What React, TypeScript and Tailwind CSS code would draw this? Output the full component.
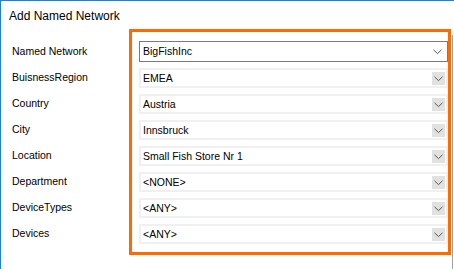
import React from "react";

const Chevron = () => (
  <svg width="9" height="6" viewBox="0 0 9 6" className="block">
    <polyline points="0.5,0.8 4.5,4.6 8.5,0.8" fill="none" stroke="#5a5a5a" strokeWidth="1" />
  </svg>
);

const rows = [
  { label: "Named Network", value: "BigFishInc" },
  { label: "BuisnessRegion", value: "EMEA" },
  { label: "Country", value: "Austria" },
  { label: "City", value: "Innsbruck" },
  { label: "Location", value: "Small Fish Store Nr 1" },
  { label: "Department", value: "<NONE>" },
  { label: "DeviceTypes", value: "<ANY>" },
  { label: "Devices", value: "<ANY>" },
];

export default function App() {
  return (
    <div
      className="w-[454px] h-[269px] bg-white border-l border-t border-[#1883d7] flex flex-col overflow-hidden text-black"
      style={{ fontFamily: '"Liberation Sans", Arial, sans-serif' }}
    >
      <div className="h-[28px] pl-[8px] pt-[8px] text-[12px] leading-[14px]">Add Named Network</div>
      <div className="flex flex-1 items-start">
        <div className="w-[128px] pl-[11px] pt-[12px] flex flex-col gap-[6px] text-[10.5px]">
          {rows.map((r, i) => (
            <div key={r.label} className={`${i === 0 ? "h-[21px]" : "h-[20px]"} flex items-center`}>
              {r.label}
            </div>
          ))}
        </div>
        <div className="w-[322px] h-[226px] border-[3px] border-[#ff6a00] pl-[7px] pt-[9px] flex flex-col gap-[6px] text-[10.5px]">
          {rows.map((r, i) =>
            i === 0 ? (
              <div
                key={r.label}
                className="w-[309px] h-[21px] border border-[#7a7a7a] bg-white flex items-center pl-[3px]"
              >
                <span className="flex-1">{r.value}</span>
                <span className="w-[13px] mr-[3px] flex justify-center">
                  <Chevron />
                </span>
              </div>
            ) : (
              <div
                key={r.label}
                className="w-[309px] h-[20px] border-2 border-[#f0f0f0] bg-white flex items-center pl-[2px] pt-[1px]"
              >
                <span className="flex-1">{r.value}</span>
                <span className="w-[13px] h-[13px] mr-[1px] bg-[#e1e1e1] flex items-center justify-center">
                  <Chevron />
                </span>
              </div>
            )
          )}
        </div>
        <div className="w-px ml-[1px] mt-[6px] self-stretch bg-[#a0a0a0]" />
      </div>
    </div>
  );
}
